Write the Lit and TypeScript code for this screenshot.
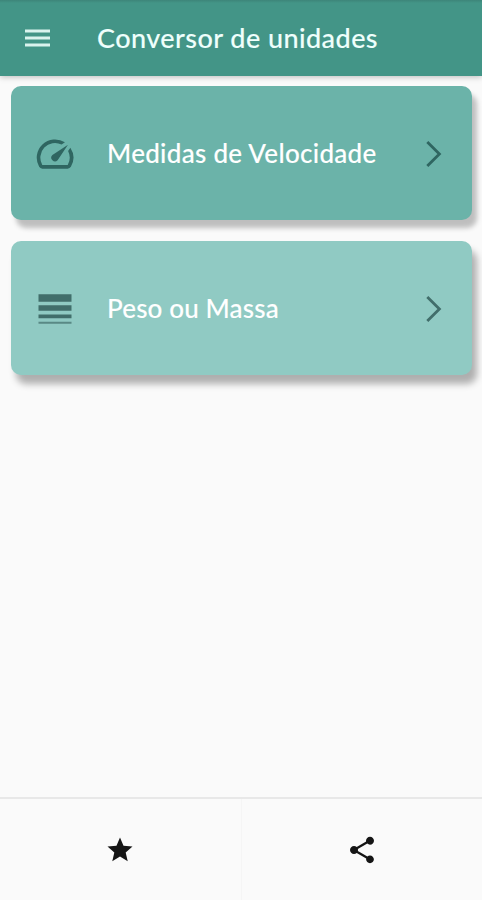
import { LitElement, html, css, svg } from "lit";
import { customElement, property } from "lit/decorators.js";

const icons = {
  speed: svg`<path d="M20.38 8.57l-1.23 1.85a8 8 0 0 1-.22 7.58H5.07A8 8 0 0 1 15.58 6.85l1.85-1.23A10 10 0 0 0 3.35 19a2 2 0 0 0 1.72 1h13.85a2 2 0 0 0 1.74-1 10 10 0 0 0-.27-10.44zm-9.79 6.84a2 2 0 0 0 2.83 0l5.66-8.49-8.49 5.66a2 2 0 0 0 0 2.83z"/>`,
  weight: svg`<path d="M3 17h18v-2H3v2zm0-4h18v-3H3v3zm0-9v4h18V4H3z"/><path opacity=".7" d="M3 20h18v-1H3v1z"/>`,
};

@customElement("unit-card")
export class UnitCard extends LitElement {
  @property() label = "";
  @property() icon: keyof typeof icons = "speed";

  static styles = css`
    :host {
      display: flex;
      align-items: center;
      box-sizing: border-box;
      height: 134px;
      padding: 0 27px 0 22px;
      border-radius: 10px;
      color: #fff;
      font-size: 26px;
    }
    .icon {
      width: 44px;
      height: 44px;
      margin-top: 2px;
      fill: var(--icon-color, #2f6661);
      flex: none;
    }
    .label {
      flex: 1;
      margin-left: 30px;
      padding-bottom: 1px;
      line-height: 32px;
      white-space: nowrap;
      letter-spacing: var(--tracking, 0);
      -webkit-text-stroke: 0.1px currentColor;
    }
    .chevron {
      width: 22px;
      height: 32px;
      margin-top: 1px;
      fill: none;
      stroke: var(--icon-color, #2f6661);
      stroke-width: 2.8;
      flex: none;
    }
  `;

  render() {
    return html`
      <svg class="icon" viewBox="0 0 24 24">${icons[this.icon]}</svg>
      <span class="label">${this.label}</span>
      <svg class="chevron" viewBox="0 0 22 32"><path d="M4.3 3.9 16.4 16 4.3 28.1" /></svg>
    `;
  }
}

@customElement("app-root")
export class AppRoot extends LitElement {
  static styles = css`
    :host {
      display: flex;
      flex-direction: column;
      height: 900px;
      overflow: hidden;
      background: #fafafa;
      font-family: Lato, "Open Sans", sans-serif;
      font-weight: 500;
    }
    header {
      display: flex;
      align-items: center;
      box-sizing: border-box;
      height: 76px;
      padding-left: 25px;
      flex: none;
      color: #effffc;
      background: linear-gradient(#3d8579, #439587 3px);
      box-shadow: 0 1px 6px rgba(0, 0, 0, 0.25);
    }
    .menu {
      width: 25px;
      height: 18px;
      fill: #daf3ee;
    }
    h1 {
      margin: 0 0 0 47px;
      font-size: 27px;
      font-weight: 500;
      line-height: 32px;
      white-space: nowrap;
      letter-spacing: 0.44px;
      -webkit-text-stroke: 0.1px currentColor;
    }
    main {
      flex: 1;
      display: flex;
      flex-direction: column;
      gap: 21px;
      padding: 10px 10px 0 11px;
    }
    .speed {
      background: #6bb3a9;
      box-shadow: 5px 8px 5px rgba(0, 0, 0, 0.24);
      --tracking: 0.3px;
    }
    .mass {
      background: #90cac3;
      box-shadow: 5px 9px 7px rgba(0, 0, 0, 0.3);
      --tracking: 0.15px;
      --icon-color: #416e6b;
    }
    footer {
      display: flex;
      flex: none;
      box-sizing: border-box;
      height: 103px;
      border-top: 2px solid #e8e8e8;
    }
    .action {
      flex: 1;
      display: flex;
      align-items: center;
      justify-content: center;
      fill: #151515;
    }
    .action:first-child {
      border-right: 1px solid #f5f5f5;
    }
    .star {
      width: 30px;
      height: 30px;
    }
    .share {
      width: 32px;
      height: 32px;
    }
  `;

  render() {
    return html`
      <header>
        <svg class="menu" viewBox="0 0 25 18">
          <path d="M0 .5h25v3H0zM0 7.5h25v3H0zM0 14.5h25v3H0z" />
        </svg>
        <h1>Conversor de unidades</h1>
      </header>
      <main>
        <unit-card class="speed" icon="speed" label="Medidas de Velocidade"></unit-card>
        <unit-card class="mass" icon="weight" label="Peso ou Massa"></unit-card>
      </main>
      <footer>
        <div class="action">
          <svg class="star" viewBox="0 0 24 24">
            <path d="M12 17.27 18.18 21l-1.64-7.03L22 9.24l-7.19-.61L12 2 9.19 8.63 2 9.24l5.46 4.73L5.82 21z" />
          </svg>
        </div>
        <div class="action">
          <svg class="share" viewBox="0 0 24 24">
            <path d="M18 16.08c-.76 0-1.44.3-1.96.77L8.91 12.7c.05-.23.09-.46.09-.7s-.04-.47-.09-.7l7.05-4.11c.54.5 1.25.81 2.04.81 1.66 0 3-1.34 3-3s-1.34-3-3-3-3 1.34-3 3c0 .24.04.47.09.7L8.04 9.81C7.5 9.31 6.79 9 6 9c-1.66 0-3 1.34-3 3s1.34 3 3 3c.79 0 1.5-.31 2.04-.81l7.12 4.16c-.05.21-.08.43-.08.65 0 1.61 1.31 2.92 2.92 2.92s2.92-1.31 2.92-2.92-1.31-2.92-2.92-2.92z" />
          </svg>
        </div>
      </footer>
    `;
  }
}
